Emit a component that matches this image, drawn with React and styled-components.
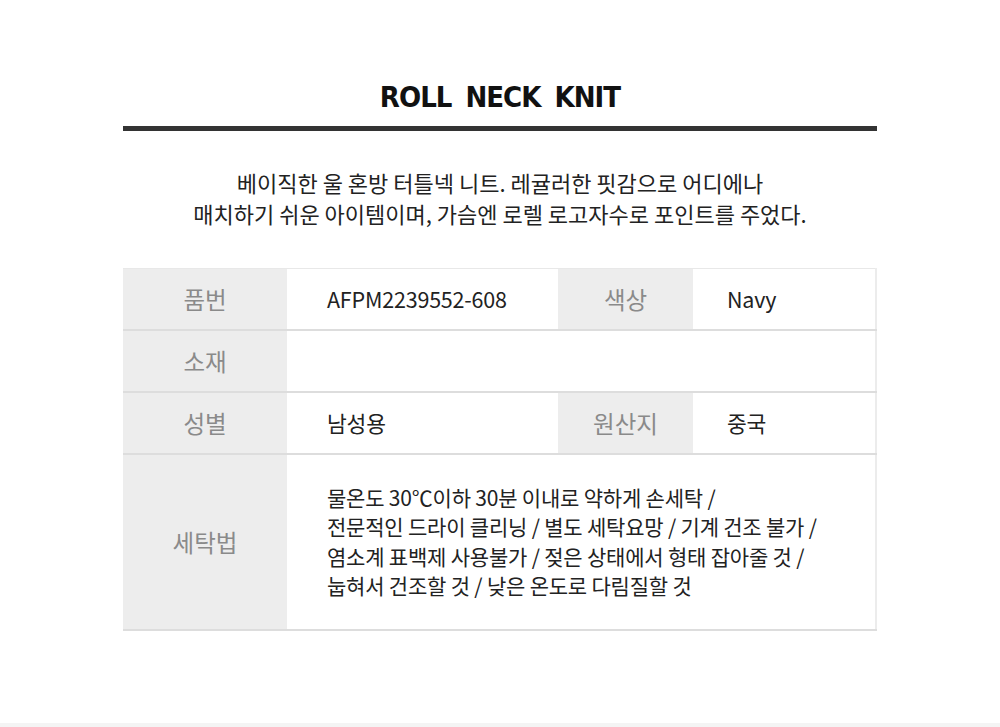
import styled, { createGlobalStyle } from "styled-components";

const GlobalStyle = createGlobalStyle`
  html, body {
    margin: 0;
    padding: 0;
    background: #ffffff;
  }
  body {
    font-family: "Noto Sans CJK KR", "Noto Sans", sans-serif;
    color: #222;
  }
`;

const rows = [
  { label: "품번", value: "AFPM2239552-608", label2: "색상", value2: "Navy" },
  { label: "소재", value: "" },
  { label: "성별", value: "남성용", label2: "원산지", value2: "중국" },
];

const washing = [
  "물온도 30℃이하 30분 이내로 약하게 손세탁 /",
  "전문적인 드라이 클리닝 / 별도 세탁요망 / 기계 건조 불가 /",
  "염소계 표백제 사용불가 / 젖은 상태에서 형태 잡아줄 것 /",
  "눕혀서 건조할 것 / 낮은 온도로 다림질할 것",
];

const App = () => {
  return (
    <Page>
      <GlobalStyle />
      <Wrap>
        <Title>ROLL NECK KNIT</Title>
        <Bar />
        <Description>
          베이직한 울 혼방 터틀넥 니트. 레귤러한 핏감으로 어디에나
          <br />
          매치하기 쉬운 아이템이며, 가슴엔 로렐 로고자수로 포인트를 주었다.
        </Description>
        <Table>
          <colgroup>
            <col style={{ width: 164 }} />
            <col style={{ width: 271 }} />
            <col style={{ width: 135 }} />
            <col />
          </colgroup>
          <tbody>
            {rows.map((r) => (
              <Row key={r.label}>
                <Label>{r.label}</Label>
                {r.label2 ? (
                  <>
                    <Value $pad={40}>{r.value}</Value>
                    <Label>{r.label2}</Label>
                    <Value $pad={34}>{r.value2}</Value>
                  </>
                ) : (
                  <Value $pad={40} colSpan={3}>
                    {r.value}
                  </Value>
                )}
              </Row>
            ))}
            <Row $tall>
              <Label>세탁법</Label>
              <Value $pad={40} colSpan={3}>
                <WashList>
                  {washing.map((line) => (
                    <li key={line}>{line}</li>
                  ))}
                </WashList>
              </Value>
            </Row>
          </tbody>
        </Table>
      </Wrap>
      <Footer />
    </Page>
  );
};

const Page = styled.div`
  width: 1000px;
  min-height: 727px;
  display: flex;
  flex-direction: column;
  background: #fff;
`;

const Wrap = styled.section`
  width: 754px;
  margin: 0 auto;
  padding-top: 78px;
  display: flex;
  flex-direction: column;
  align-items: stretch;
`;

const Title = styled.h1`
  margin: 0;
  text-align: center;
  font-family: "Liberation Sans Narrow", "DejaVu Sans Condensed", "Liberation Sans", sans-serif;
  font-weight: 700;
  font-size: 29px;
  line-height: 38px;
  letter-spacing: -1px;
  word-spacing: 6px;
  color: #111;
`;

const Bar = styled.div`
  height: 5px;
  margin-top: 10px;
  background: #333;
`;

const Description = styled.p`
  margin: 36px 0 0;
  text-align: center;
  font-size: 22px;
  line-height: 31px;
  letter-spacing: 0;
  color: #222;
`;

const Table = styled.table`
  margin-top: 39px;
  width: 754px;
  border-collapse: collapse;
  table-layout: fixed;
  border-top: 1px solid #e8e8e8;
  border-right: 2px solid #ececec;
`;

const Row = styled.tr`
  height: ${(p) => (p.$tall ? "176px" : "62px")};
  border-bottom: 2px solid #dddddd;

  &:first-child {
    height: 61px;
  }
`;

const Label = styled.td`
  padding: 0;
  background: #ededed;
  text-align: center;
  vertical-align: middle;
  font-size: 23.5px;
  color: #8a8a8a;
`;

const Value = styled.td`
  padding: 0 0 0 ${(p) => p.$pad}px;
  background: #fff;
  vertical-align: middle;
  font-size: 21.5px;
  color: #222;
  letter-spacing: -0.2px;
`;

const WashList = styled.ul`
  list-style: none;
  margin: 0;
  padding: 0;
  font-size: 21px;
  line-height: 29.5px;
`;

const Footer = styled.div`
  margin-top: auto;
  height: 4px;
  background: #f4f4f4;
`;

export default App;
